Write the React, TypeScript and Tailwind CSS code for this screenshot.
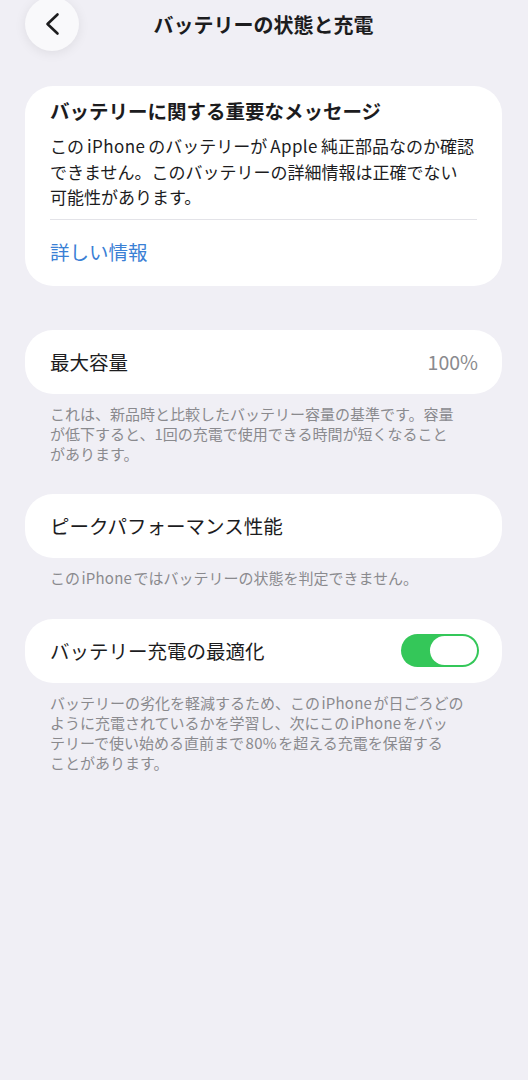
import React from 'react';

const font = {
  fontFamily: '"Noto Sans CJK JP", "Noto Sans", "Liberation Sans", sans-serif',
};

function BackButton() {
  return (
    <button
      type="button"
      className="flex items-center justify-center w-[54px] h-[54px] rounded-full bg-[#f9f9fb] shadow-[0_2px_12px_rgba(0,0,0,0.08)] -mt-[3px]"
    >
      <svg width="16" height="24" viewBox="0 0 16 24" fill="none">
        <path
          d="M13.5 2.5 L3.5 12 L13.5 21.5"
          stroke="#1c1c1e"
          strokeWidth="2.6"
          strokeLinecap="round"
          strokeLinejoin="round"
        />
      </svg>
    </button>
  );
}

function Toggle({ on }: { on: boolean }) {
  return (
    <div
      className={`flex items-center w-[78px] h-[33px] -mr-[2px] rounded-full p-[2px] ${
        on ? 'bg-[#34c759] justify-end' : 'bg-[#e5e5ea] justify-start'
      }`}
    >
      <div className="w-[47px] h-[29px] rounded-full bg-white" />
    </div>
  );
}

function Row({ label, children }: { label: string; children?: React.ReactNode }) {
  return (
    <div className="flex items-center justify-between h-[64px] px-[25px] rounded-[28px] bg-white">
      <span className="text-[19.5px] leading-[26px] text-[#1c1c1e]">{label}</span>
      {children}
    </div>
  );
}

// latin words get a bit of air around them, like the system font does
function Latin({ children, tight }: { children: React.ReactNode; tight?: boolean }) {
  return (
    <span className={tight ? 'mx-[1.5px] tracking-[0.2px]' : 'mx-[3px] tracking-[0.4px]'}>
      {children}
    </span>
  );
}

function Footer({ children }: { children: React.ReactNode }) {
  return (
    <p className="px-[25px] mt-[10px] text-[15px] leading-[20px] text-[#8a8a8e]">{children}</p>
  );
}

export default function App() {
  return (
    <div style={font} className="min-h-[1080px] w-[528px] bg-[#f0eff5] pl-[25px] pr-[26px]">
      <header className="flex items-start h-[86px]">
        <BackButton />
        <h1 className="flex-1 text-center pr-[54px] mt-[12px] text-[20px] leading-[26px] font-bold text-[#1c1c1e]">
          バッテリーの状態と充電
        </h1>
      </header>

      <section className="rounded-[28px] bg-white px-[25px] pt-[12px] pb-[21px]">
        <h2 className="text-[19.5px] leading-[26px] font-bold text-[#1c1c1e]">
          バッテリーに関する重要なメッセージ
        </h2>
        <p className="mt-[9px] text-[17px] leading-[25.5px] text-[#1c1c1e]">
          この<Latin>iPhone</Latin>のバッテリーが<Latin>Apple</Latin>純正部品なのか確認
          <br />
          できません。このバッテリーの詳細情報は正確でない
          <br />
          可能性があります。
        </p>
        <div className="mt-[9px] h-px bg-[#e3e3e8]" />
        <a className="block mt-[19px] text-[19.5px] leading-[26px] text-[#3a80d5]">詳しい情報</a>
      </section>

      <div className="mt-[44px]">
        <Row label="最大容量">
          <span className="-mr-[1px] text-[19.5px] leading-[26px] text-[#8a8a8e]">100%</span>
        </Row>
        <Footer>
          これは、新品時と比較したバッテリー容量の基準です。容量
          <br />
          が低下すると、1回の充電で使用できる時間が短くなること
          <br />
          があります。
        </Footer>
      </div>

      <div className="mt-[30px]">
        <Row label="ピークパフォーマンス性能" />
        <Footer>
          この<Latin tight>iPhone</Latin>ではバッテリーの状態を判定できません。
        </Footer>
      </div>

      <div className="mt-[31px]">
        <Row label="バッテリー充電の最適化">
          <Toggle on />
        </Row>
        <Footer>
          バッテリーの劣化を軽減するため、この<Latin tight>iPhone</Latin>が日ごろどの
          <br />
          ように充電されているかを学習し、次にこの<Latin tight>iPhone</Latin>をバッ
          <br />
          テリーで使い始める直前まで<Latin tight>80%</Latin>を超える充電を保留する
          <br />
          ことがあります。
        </Footer>
      </div>
    </div>
  );
}
